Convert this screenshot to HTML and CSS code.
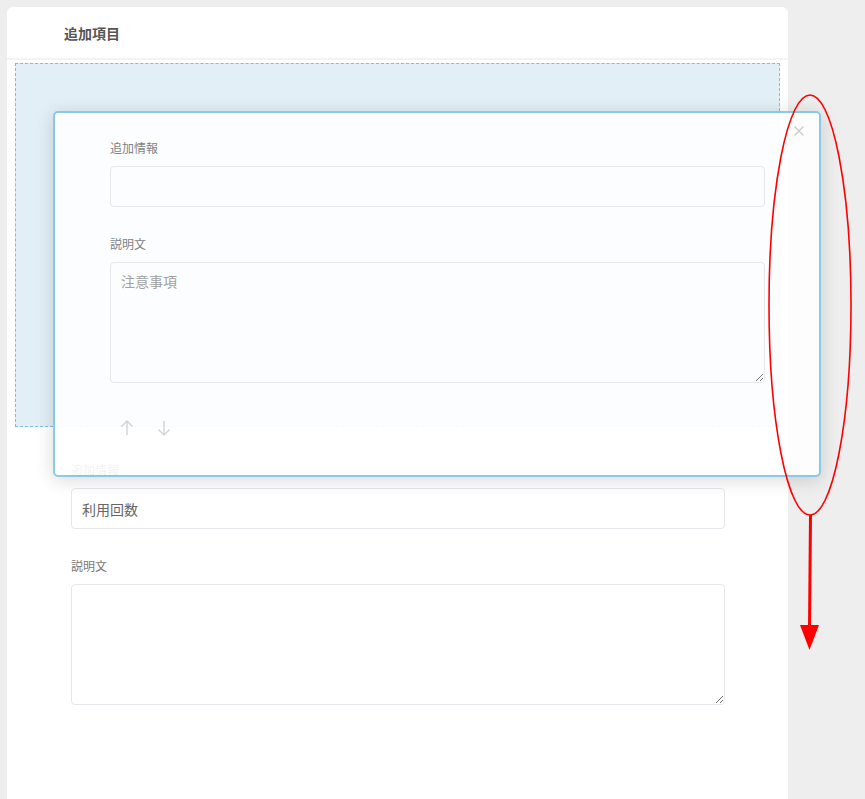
FILE: index.html
```html
<!DOCTYPE html>
<html lang="ja">
<head>
<meta charset="utf-8">
<link rel="stylesheet" href="styles.css">
</head>
<body>
<div class="page">
  <div class="card">
    <div class="card-header">追加項目</div>
    <div class="card-body">
      <div class="dropzone"></div>
      <div class="item">
        <label class="field-label">追加情報</label>
        <input class="field-input" type="text" value="利用回数">
        <label class="field-label second">説明文</label>
        <textarea class="field-textarea"></textarea>
      </div>
    </div>
  </div>
</div>

<div class="drag-card">
  <span class="close">
    <svg width="12" height="12" viewBox="0 0 12 12"><path d="M1.5 1.5 L10.5 10.5 M10.5 1.5 L1.5 10.5" stroke="#c8c8c8" stroke-width="1.3" fill="none"/></svg>
  </span>
  <label class="field-label">追加情報</label>
  <input class="field-input" type="text" value="">
  <label class="field-label second">説明文</label>
  <textarea class="field-textarea" placeholder="注意事項"></textarea>
  <div class="moves">
    <svg width="14" height="18" viewBox="0 0 14 18"><path d="M7 16 V2 M1.5 7.5 L7 2 L12.5 7.5" stroke="#d0d0d0" stroke-width="1.4" fill="none"/></svg>
    <svg width="14" height="18" viewBox="0 0 14 18"><path d="M7 2 V16 M1.5 10.5 L7 16 L12.5 10.5" stroke="#d0d0d0" stroke-width="1.4" fill="none"/></svg>
  </div>
</div>

<svg class="annotation" width="865" height="799" viewBox="0 0 865 799">
  <ellipse cx="810" cy="305" rx="41" ry="210" fill="none" stroke="#ff0000" stroke-width="1.6"/>
  <line x1="810.5" y1="515" x2="809.5" y2="627" stroke="#ff0000" stroke-width="3"/>
  <polygon points="800,625 819,625 809.5,650" fill="#ff0000"/>
</svg>
</body>
</html>
```

FILE: styles.css
```css
html, body {
  margin: 0;
  padding: 0;
}
body {
  background: #eeeeee;
  font-family: "Noto Sans CJK JP", "Noto Sans", sans-serif;
  width: 865px;
  height: 799px;
  overflow: hidden;
  position: relative;
}
.page {
  padding: 7px 0 0 7px;
}
.card {
  width: 781px;
  height: 792px;
  background: #ffffff;
  border-radius: 6px 6px 0 0;
}
.card-header {
  height: 53px;
  box-sizing: border-box;
  padding: 17px 0 0 57px;
  font-size: 14px;
  font-weight: 700;
  color: #555555;
  line-height: 18px;
  border-bottom: 2px solid #f3f3f3;
}
.card-body {
  padding: 3px 8px 0 8px;
}
.dropzone {
  height: 364px;
  box-sizing: border-box;
  border: 1px dashed #7dbde2;
  background: #e3eff6;
}
.item {
  padding: 34px 55px 0 56px;
  display: flex;
  flex-direction: column;
}
.field-label {
  display: block;
  font-size: 12px;
  line-height: 18px;
  color: #777777;
  margin-bottom: 9px;
}
.field-label.second {
  margin-top: 28px;
}
.field-input {
  display: block;
  box-sizing: border-box;
  width: 100%;
  height: 41px;
  margin: 0;
  padding: 0 10px;
  border: 1px solid #e6e7ec;
  border-radius: 4px;
  font-family: "Noto Sans CJK JP", "Noto Sans", sans-serif;
  font-size: 14px;
  color: #666666;
  background: #ffffff;
  outline: none;
}
.field-textarea {
  display: block;
  box-sizing: border-box;
  width: 100%;
  height: 121px;
  margin: 0;
  padding: 8px 10px;
  border: 1px solid #e6e7ec;
  border-radius: 4px;
  font-family: "Noto Sans CJK JP", "Noto Sans", sans-serif;
  font-size: 14px;
  line-height: 20px;
  color: #555555;
  background: #ffffff;
  resize: vertical;
  outline: none;
}
.field-textarea::placeholder {
  color: #999999;
}
.drag-card {
  position: absolute;
  left: 53px;
  top: 111px;
  width: 768px;
  height: 366px;
  box-sizing: border-box;
  border: 2px solid #80c6e6;
  border-radius: 5px;
  background: #ffffff;
  opacity: 0.91;
  box-shadow: 0 3px 18px rgba(0, 0, 0, 0.16);
  padding: 26px 54px 0 55px;
  display: flex;
  flex-direction: column;
}
.close {
  position: absolute;
  right: 14px;
  top: 12px;
  width: 12px;
  height: 12px;
  display: flex;
}
.moves {
  display: flex;
  gap: 23px;
  margin-top: 36px;
  padding-left: 10px;
}
.moves svg {
  display: block;
}
.annotation {
  position: absolute;
  left: 0;
  top: 0;
  pointer-events: none;
}
```
